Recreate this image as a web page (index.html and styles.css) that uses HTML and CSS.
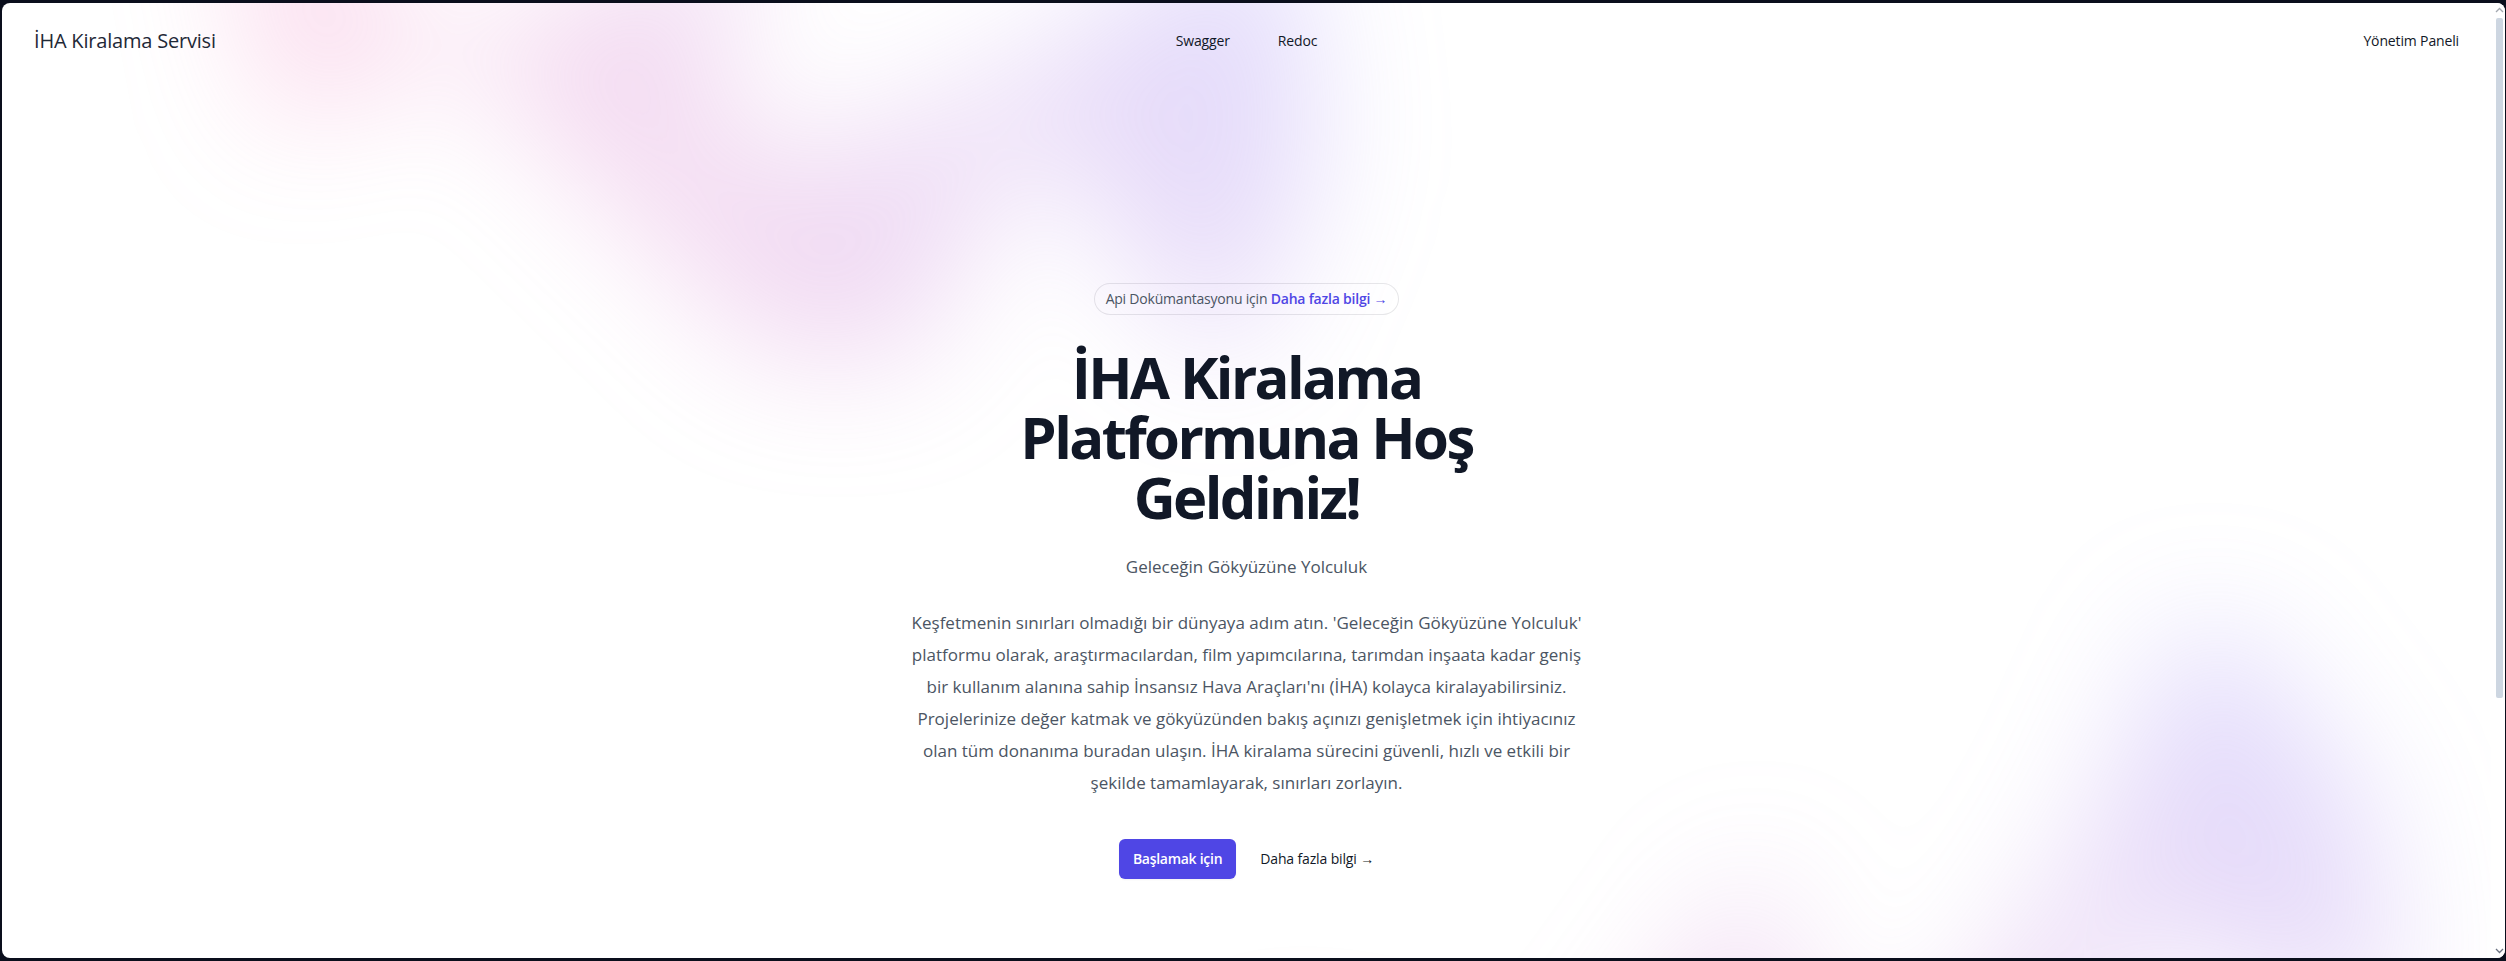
FILE: index.html
```html
<!DOCTYPE html>
<html lang="tr">
<head>
<meta charset="utf-8">
<title>İHA Kiralama Servisi</title>
<link rel="stylesheet" href="styles.css">
</head>
<body>
<div class="window">
  <div class="page">
    <div class="blob blob-top"><div class="blob-shape blob-shape-top"></div></div>
    <div class="blob blob-bottom"><div class="blob-shape blob-shape-bottom"></div></div>

    <header class="nav">
      <div class="nav-side"><a class="logo" href="#">İHA Kiralama Servisi</a></div>
      <nav class="nav-links">
        <a href="#">Swagger</a>
        <a href="#">Redoc</a>
      </nav>
      <div class="nav-side nav-end"><a href="#">Yönetim Paneli</a></div>
    </header>

    <main class="hero">
      <div class="hero-inner">
        <div class="pill-row">
          <div class="pill">Api Dokümantasyonu için <a href="#" class="pill-link">Daha fazla bilgi <span class="arrow">→</span></a></div>
        </div>
        <h1 class="title">İHA Kiralama Platformuna Hoş Geldiniz!</h1>
        <p class="subtitle">Geleceğin Gökyüzüne Yolculuk</p>
        <p class="lead">Keşfetmenin sınırları olmadığı bir dünyaya adım atın. 'Geleceğin Gökyüzüne Yolculuk'<br>platformu olarak, araştırmacılardan, film yapımcılarına, tarımdan inşaata kadar geniş<br>bir kullanım alanına sahip İnsansız Hava Araçları'nı (İHA) kolayca kiralayabilirsiniz.<br>Projelerinize değer katmak ve gökyüzünden bakış açınızı genişletmek için ihtiyacınız<br>olan tüm donanıma buradan ulaşın. İHA kiralama sürecini güvenli, hızlı ve etkili bir<br>şekilde tamamlayarak, sınırları zorlayın.</p>
        <div class="actions">
          <a href="#" class="btn-primary">Başlamak için</a>
          <a href="#" class="btn-link">Daha fazla bilgi <span class="arrow">→</span></a>
        </div>
      </div>
    </main>
  </div>
  <div class="scrollbar">
    <div class="sb-arrow">
      <svg width="9" height="6" viewBox="0 0 9 6"><path d="M1 5 L4.5 1.5 L8 5" fill="none" stroke="#a3a8b0" stroke-width="1.3"/></svg>
    </div>
    <div class="sb-thumb"></div>
    <div class="sb-fill"></div>
    <div class="sb-arrow">
      <svg width="9" height="6" viewBox="0 0 9 6"><path d="M1 1 L4.5 4.5 L8 1" fill="none" stroke="#6b7280" stroke-width="1.3"/></svg>
    </div>
  </div>
</div>
</body>
</html>
```

FILE: styles.css
```css
* { box-sizing: border-box; }
html, body { margin: 0; height: 100%; }
body {
  background: #0a0e1c;
  padding: 3px 1px 3px 2px;
  font-family: "Open Sans", "Noto Sans", sans-serif;
  color: #111827;
}
a { color: inherit; text-decoration: none; }

.window {
  height: 955px;
  background: #ffffff;
  border-radius: 8px;
  overflow: hidden;
  display: flex;
}

.page {
  flex: 1;
  position: relative;
  overflow: hidden;
  isolation: isolate;
}

/* decorative blurred background shapes */
.blob {
  position: absolute;
  left: 0;
  right: 0;
  overflow: hidden;
  filter: blur(64px);
  z-index: 0;
  pointer-events: none;
}
.blob-top { top: -320px; }
.blob-bottom { top: 620px; }
.blob-shape {
  width: 1155px;
  aspect-ratio: 1155 / 678;
  background: linear-gradient(to top right, #ff80b5, #9089fc);
  opacity: 0.3;
  clip-path: polygon(74.1% 44.1%, 100% 61.6%, 97.5% 26.9%, 85.5% 0.1%, 80.7% 2%, 72.5% 32.5%, 60.2% 62.4%, 52.4% 68.1%, 47.5% 58.3%, 45.2% 34.5%, 27.5% 76.7%, 0.1% 64.9%, 17.9% 100%, 27.6% 76.8%, 76.1% 97.7%, 74.1% 44.1%);
}
.blob-shape-top {
  margin-left: calc(50% - 480px);
  transform: translateX(-50%) rotate(30deg);
}
.blob-shape-bottom {
  margin-left: calc(50% + 576px);
  transform: translateX(-50%);
}

/* nav */
.nav {
  position: relative;
  z-index: 2;
  display: flex;
  align-items: center;
  justify-content: space-between;
  padding: 24px 32px;
  height: 76px;
  font-size: 14px;
  line-height: 24px;
  font-weight: 500;
  letter-spacing: -0.01em;
}
.nav-side { flex: 1; display: flex; }
.nav-end { justify-content: flex-end; }
.logo {
  font-size: 20px;
  line-height: 28px;
  font-weight: 500;
  color: #1f2937;
  letter-spacing: -0.01em;
}
.nav-links { display: flex; gap: 48px; }

/* hero */
.hero {
  position: relative;
  z-index: 1;
  padding: 204px 24px 224px;
}
.hero-inner {
  max-width: 700px;
  margin: 0 auto;
  text-align: center;
}
.pill-row { display: flex; justify-content: center; margin-bottom: 32px; }
.pill {
  border-radius: 9999px;
  padding: 4px 12px;
  font-size: 14px;
  line-height: 24px;
  color: #4b5563;
  box-shadow: inset 0 0 0 1px rgba(17, 24, 39, 0.1);
  letter-spacing: -0.015em;
}
.pill-link { color: #4f46e5; font-weight: 600; }
.arrow { font-family: "Liberation Sans", "DejaVu Sans", sans-serif; font-weight: 400; }

.title {
  margin: 0 auto;
  max-width: 540px;
  font-size: 58px;
  line-height: 60px;
  font-weight: 700;
  letter-spacing: -0.045em;
  color: #111827;
}
.subtitle, .lead {
  margin: 24px 0 0;
  font-size: 17px;
  line-height: 32px;
  color: #4b5563;
  letter-spacing: 0;
}
.lead { white-space: nowrap; }

.actions {
  margin-top: 40px;
  display: flex;
  align-items: center;
  justify-content: center;
  gap: 24px;
}
.btn-primary {
  background: #4f46e5;
  color: #ffffff;
  border-radius: 6px;
  padding: 10px 14px;
  font-size: 14px;
  line-height: 20px;
  font-weight: 600;
  box-shadow: 0 1px 2px rgba(0, 0, 0, 0.05);
  letter-spacing: -0.02em;
}
.btn-link {
  font-size: 14px;
  line-height: 24px;
  font-weight: 500;
  color: #111827;
  letter-spacing: -0.01em;
}

/* fake scrollbar */
.scrollbar {
  width: 14px;
  display: flex;
  flex-direction: column;
  align-items: center;
  padding-left: 3px;
  background: #ffffff;
}
.sb-arrow {
  height: 14px;
  display: flex;
  align-items: center;
  justify-content: center;
}
.sb-thumb {
  margin-top: 1px;
  width: 7px;
  height: 680px;
  background: #cdd6e1;
  border-radius: 2px;
}
.sb-fill { flex: 1; }
```
